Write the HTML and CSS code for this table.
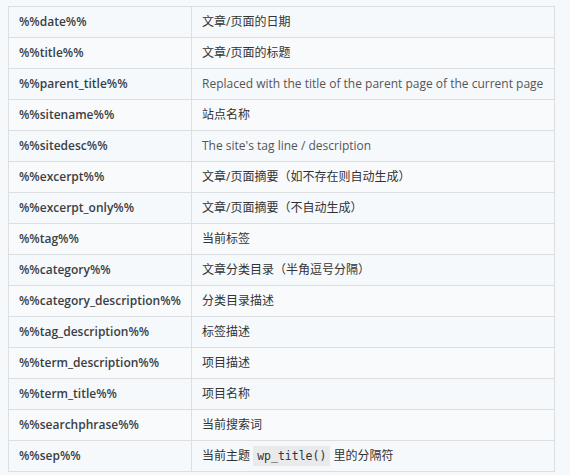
FILE: index.html
```html
<!DOCTYPE html>
<html lang="zh">
<head>
<meta charset="utf-8">
<link rel="stylesheet" href="styles.css">
</head>
<body>
<table class="vars">
<tbody>
<tr><td class="key">%%date%%</td><td class="val">文章/页面的日期</td></tr>
<tr><td class="key">%%title%%</td><td class="val">文章/页面的标题</td></tr>
<tr><td class="key">%%parent_title%%</td><td class="val en">Replaced with the title of the parent page of the current page</td></tr>
<tr><td class="key">%%sitename%%</td><td class="val">站点名称</td></tr>
<tr><td class="key">%%sitedesc%%</td><td class="val en">The site's tag line / description</td></tr>
<tr><td class="key">%%excerpt%%</td><td class="val">文章/页面摘要（如不存在则自动生成）</td></tr>
<tr><td class="key">%%excerpt_only%%</td><td class="val">文章/页面摘要（不自动生成）</td></tr>
<tr><td class="key">%%tag%%</td><td class="val">当前标签</td></tr>
<tr><td class="key">%%category%%</td><td class="val">文章分类目录（半角逗号分隔）</td></tr>
<tr><td class="key">%%category_description%%</td><td class="val">分类目录描述</td></tr>
<tr><td class="key">%%tag_description%%</td><td class="val">标签描述</td></tr>
<tr><td class="key">%%term_description%%</td><td class="val">项目描述</td></tr>
<tr><td class="key">%%term_title%%</td><td class="val">项目名称</td></tr>
<tr><td class="key">%%searchphrase%%</td><td class="val">当前搜索词</td></tr>
<tr><td class="key">%%sep%%</td><td class="val">当前主题 <code>wp_title()</code> 里的分隔符</td></tr>
</tbody>
</table>
</body>
</html>
```
FILE: styles.css
```css
html, body {
  background: #f5f9fc;
}
body {
  margin: 6px 8px;
  font-family: "Open Sans", "Noto Sans CJK SC", sans-serif;
  font-size: 12px;
  color: #444;
}
.vars {
  border-collapse: collapse;
  width: 547px;
  border: 1px solid #cfd2d5;
}
.vars tr:nth-child(odd) td {
  background: #f5f9fc;
}
.vars tr:nth-child(even) td {
  background: #f9fafb;
}
.vars td {
  border: 1px solid #dcdfe2;
  padding: 7px 10px;
  line-height: 16px;
  vertical-align: middle;
}
.key {
  width: 162px;
  font-weight: 600;
  font-size: 12px;
  color: #3a3f44;
}
.val {
  color: #333;
  white-space: nowrap;
}
.val.en {
  color: #555;
}
code {
  font-family: "DejaVu Sans Mono", monospace;
  font-size: 11.5px;
  background: #e8eaeb;
  padding: 3px 4px;
  color: #333;
}
```
